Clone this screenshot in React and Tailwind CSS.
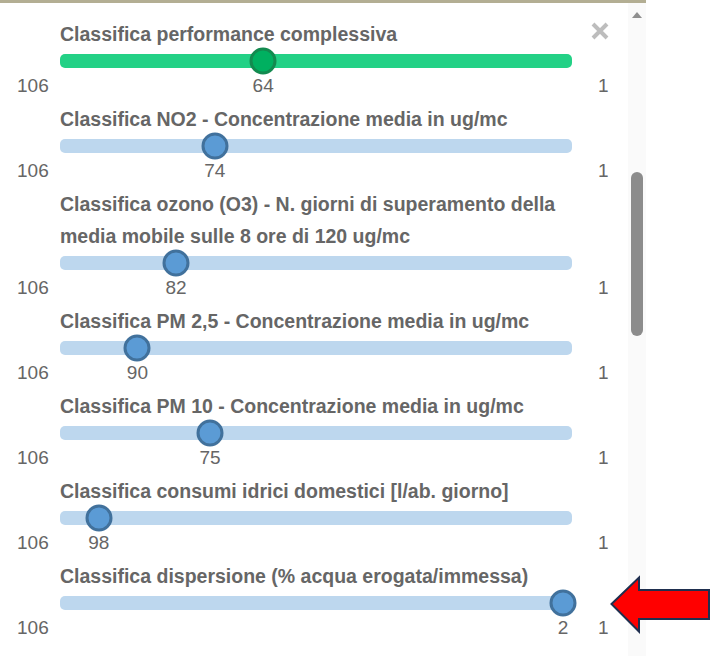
const rankings = [
  { title: 'Classifica performance complessiva', value: 64, green: true },
  { title: 'Classifica NO2 - Concentrazione media in ug/mc', value: 74 },
  { title: 'Classifica ozono (O3) - N. giorni di superamento della media mobile sulle 8 ore di 120 ug/mc', value: 82 },
  { title: 'Classifica PM 2,5 - Concentrazione media in ug/mc', value: 90 },
  { title: 'Classifica PM 10 - Concentrazione media in ug/mc', value: 75 },
  { title: 'Classifica consumi idrici domestici [l/ab. giorno]', value: 98 },
  { title: 'Classifica dispersione (% acqua erogata/immessa)', value: 2 },
];

const MIN = 106;
const MAX = 1;
const RANGE = 508;

const RankSlider = ({ title, value, green }) => {
  const offset = ((MIN - value) / (MIN - MAX)) * RANGE;

  return (
    <div className="pb-[5px]">
      <div className="pl-[60px]">
        <p className="w-[512px] text-[19.5px] leading-[32px] font-bold text-[#666666]">{title}</p>
        <div
          className={`relative mt-1 h-[14px] w-[512px] rounded-[5px] ${green ? 'bg-[#23d186]' : 'bg-[#bdd7ee]'}`}
        >
          <div
            className={`absolute top-1/2 h-[27px] w-[27px] -translate-x-1/2 -translate-y-1/2 rounded-full border-[3px] ${
              green ? 'bg-[#00b060] border-[#138a4f]' : 'bg-[#5b9bd5] border-[#41719c]'
            }`}
            style={{ left: offset }}
          ></div>
        </div>
      </div>
      <div className="mt-1.5 flex h-[24px] items-center text-[19px] leading-[24px] text-[#666666]">
        <span className="w-[60px] pl-[17px]">{MIN}</span>
        <div className="relative h-full w-[512px]">
          <span className="absolute top-0 -translate-x-1/2" style={{ left: offset }}>
            {value}
          </span>
        </div>
        <span className="ml-[26px]">{MAX}</span>
      </div>
    </div>
  );
};

const App = () => {
  return (
    <div className="relative h-[656px] w-[711px] overflow-hidden bg-white" style={{ fontFamily: '"Liberation Sans", Arial, sans-serif' }}>
      <div className="h-[3px] w-[646px] bg-[#b3ae93]"></div>
      <div className="flex">
        <div className="relative w-[628px] pt-[15px]">
          <button className="absolute right-[19px] top-[19px] h-[18px] w-[18px] text-[#bdbdbd]" title="Chiudi">
            <svg viewBox="0 0 18 18" className="h-[18px] w-[18px]" stroke="currentColor" strokeWidth={4}>
              <path d="M2 2L16 16M16 2L2 16" />
            </svg>
          </button>
          {rankings.map(item => (
            <RankSlider key={item.title} {...item} />
          ))}
        </div>
        <div className="flex h-[653px] w-[18px] flex-col items-center bg-[#fafafa]">
          <svg viewBox="0 0 10 6" className="mt-[9px] h-[6px] w-[10px] text-[#8f8f8f]" fill="currentColor">
            <path d="M5 0L10 6H0z" />
          </svg>
          <div className="mt-[154px] h-[164px] w-[12px] rounded-full bg-[#8c8c8c]"></div>
        </div>
      </div>
      <svg className="absolute left-[606px] top-[572px] h-[66px] w-[105px]" viewBox="606 572 105 66">
        <path
          d="M611.5 604L639 577.5V590H709V619H639V631.5Z"
          fill="#ff0000"
          stroke="#1f2f4f"
          strokeWidth={2}
          strokeLinejoin="miter"
        />
      </svg>
    </div>
  );
};

export default App;
